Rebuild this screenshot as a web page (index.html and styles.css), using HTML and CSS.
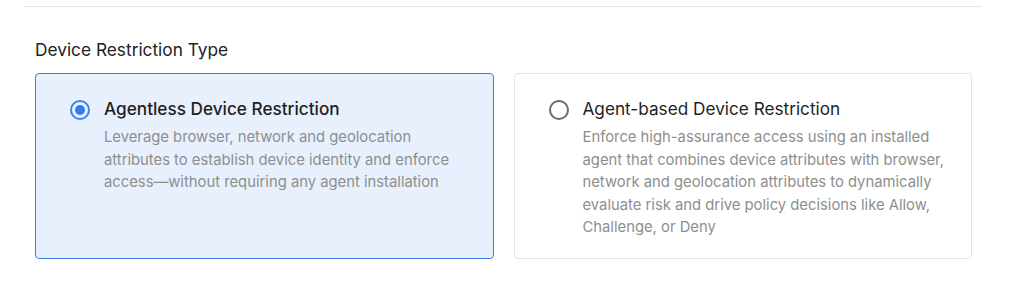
FILE: index.html
```
<!DOCTYPE html>
<html lang="en">
	<head>
		<meta charset="UTF-8" />
		<meta name="viewport" content="width=device-width, initial-scale=1.0" />
		<title>Device Restriction Type</title>
		<link rel="stylesheet" href="styles.css">
	</head>
	<body>
		<div class="divider"></div>

		<div class="section">
			<div class="section-title">Device Restriction Type</div>

			<div class="options">
				<label class="option selected">
					<span class="radio"><span class="dot"></span></span>
					<span class="option-body">
						<span class="option-title">Agentless Device Restriction</span>
						<span class="option-desc">Leverage browser, network and geolocation attributes to establish device identity and enforce access—without requiring any agent installation</span>
					</span>
				</label>

				<label class="option">
					<span class="radio"></span>
					<span class="option-body">
						<span class="option-title">Agent-based Device Restriction</span>
						<span class="option-desc">Enforce high-assurance access using an installed agent that combines device attributes with browser, network and geolocation attributes to dynamically evaluate risk and drive policy decisions like Allow, Challenge, or Deny</span>
					</span>
				</label>
			</div>
		</div>
	</body>
</html>
```

FILE: styles.css
```
body {
	margin: 0;
	font-family: Inter, "Noto Sans", sans-serif;
	background: #fff;
	color: #1f1f1f;
}
.divider {
	margin: 6px 28px 0 24px;
	border-top: 1px solid #e6e6e6;
}
.section {
	padding: 32px 38px 0 35px;
}
.section-title {
	font-size: 17.3px;
	line-height: 22px;
	color: #222;
	margin-bottom: 12px;
}
.options {
	display: grid;
	grid-template-columns: 1fr 1fr;
	gap: 20px;
}
.option {
	display: flex;
	gap: 14px;
	height: 186px;
	box-sizing: border-box;
	padding: 23px 24px 0 34px;
	border: 1px solid #e3e3e3;
	border-radius: 4px;
	background: #fff;
	cursor: pointer;
}
.option.selected {
	background: #e8f0fd;
	border-color: #3b7fe6;
}
.radio {
	flex: none;
	width: 20px;
	height: 20px;
	margin-top: 3px;
	box-sizing: border-box;
	border: 2px solid #6b6b6b;
	border-radius: 50%;
	display: flex;
	align-items: center;
	justify-content: center;
}
.selected .radio {
	border-color: #3a82f0;
}
.dot {
	width: 10px;
	height: 10px;
	border-radius: 50%;
	background: #2f7cf2;
}
.option-body {
	display: flex;
	flex-direction: column;
}
.option-title {
	font-size: 17.2px;
	line-height: 23px;
	font-weight: 400;
	color: #1f1f1f;
	margin-bottom: 6px;
}
.selected .option-title {
	font-weight: 500;
}
.option-desc {
	font-size: 14.8px;
	line-height: 22.5px;
	color: #8e8e8e;
}
```
